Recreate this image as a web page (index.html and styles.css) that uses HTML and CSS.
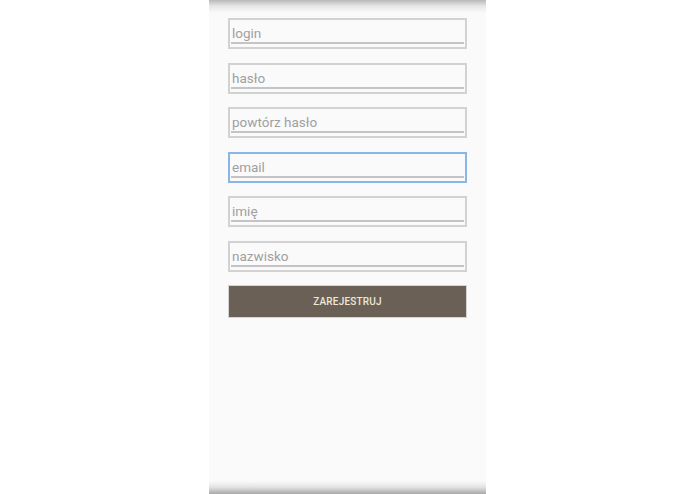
FILE: index.html
```html
<!DOCTYPE html>
<html lang="pl">
<head>
  <meta charset="UTF-8">
  <meta name="viewport" content="width=device-width, initial-scale=1.0">
  <title>Rejestracja</title>
  <link rel="stylesheet" href="styles.css">
</head>
<body>

<div class="screen">
  <form class="register-form">
    <div class="field"><span class="field-input">login</span></div>
    <div class="field"><span class="field-input">hasło</span></div>
    <div class="field"><span class="field-input">powtórz hasło</span></div>
    <div class="field focused"><span class="field-input">email</span></div>
    <div class="field"><span class="field-input">imię</span></div>
    <div class="field"><span class="field-input">nazwisko</span></div>
    <button type="button" class="submit-btn">ZAREJESTRUJ</button>
  </form>
</div>

</body>
</html>
```

FILE: styles.css
```css
body {
  margin: 0;
  background-color: #ffffff;
  font-family: Roboto, "Liberation Sans", Arial, sans-serif;
}
.screen {
  width: 277px;
  height: 494px;
  margin-left: 209px;
  background:
    linear-gradient(to bottom, #b8b8b8 0, #e6e6e6 6px, #fafafa 13px, #fafafa 481px, #e4e4e4 487px, #a8a8a8 494px);
  box-sizing: border-box;
  padding: 18px 19px 0 19px;
}
.register-form {
  display: flex;
  flex-direction: column;
  gap: 13.5px;
}
.field {
  height: 31px;
  box-sizing: border-box;
  border: 2px solid #d2d2d2;
  padding: 0 1px 3px 1px;
  display: flex;
  align-items: flex-end;
}
.field.focused {
  border-color: #88b6e8; /* champ actif */
}
.field-input {
  flex: 1;
  border-bottom: 2px solid #c4c4c4;
  color: #a0a0a0;
  font-size: 13.5px;
  line-height: 17px;
  padding-left: 1px;
}
.submit-btn {
  height: 33px;
  margin-top: -0.5px;
  background-color: #6b6055;
  border: 1px solid #d4d4d4;
  color: #ebe8d8;
  font-family: Roboto, "Liberation Sans", Arial, sans-serif;
  font-size: 10px;
  font-weight: 500;
  letter-spacing: 0.2px;
  cursor: pointer;
}
```
